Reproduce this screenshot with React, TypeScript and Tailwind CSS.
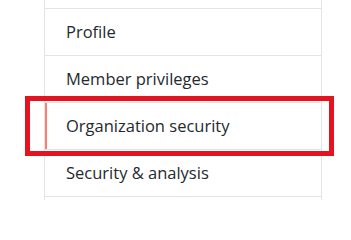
import React from "react";

const items = [
  { label: "Profile" },
  { label: "Member privileges" },
  { label: "Organization security", selected: true },
  { label: "Security & analysis" },
  { label: "" },
];

export default function App() {
  return (
    <div
      className="relative h-[200px] w-[351px] overflow-hidden bg-white"
      style={{ fontFamily: '"Open Sans", "Noto Sans", sans-serif' }}
    >
      <div className="ml-[44px] w-[278px] border-x border-[#e1e4e8]">
        <div className="h-[8px]" />
        {items.map((item, i) => (
          <div
            key={i}
            className="relative flex h-[47px] items-center border-t border-[#e1e4e8] pl-[21px] text-[16.5px] text-[#24292e]"
          >
            {item.selected && (
              <span className="absolute left-0 top-0 h-[47px] w-[2px] bg-[#f9826c]" />
            )}
            {item.label}
          </div>
        ))}
      </div>
      <div className="pointer-events-none absolute left-[25px] top-[96px] h-[60px] w-[309px] border-[5px] border-[#e3141f]" />
    </div>
  );
}
